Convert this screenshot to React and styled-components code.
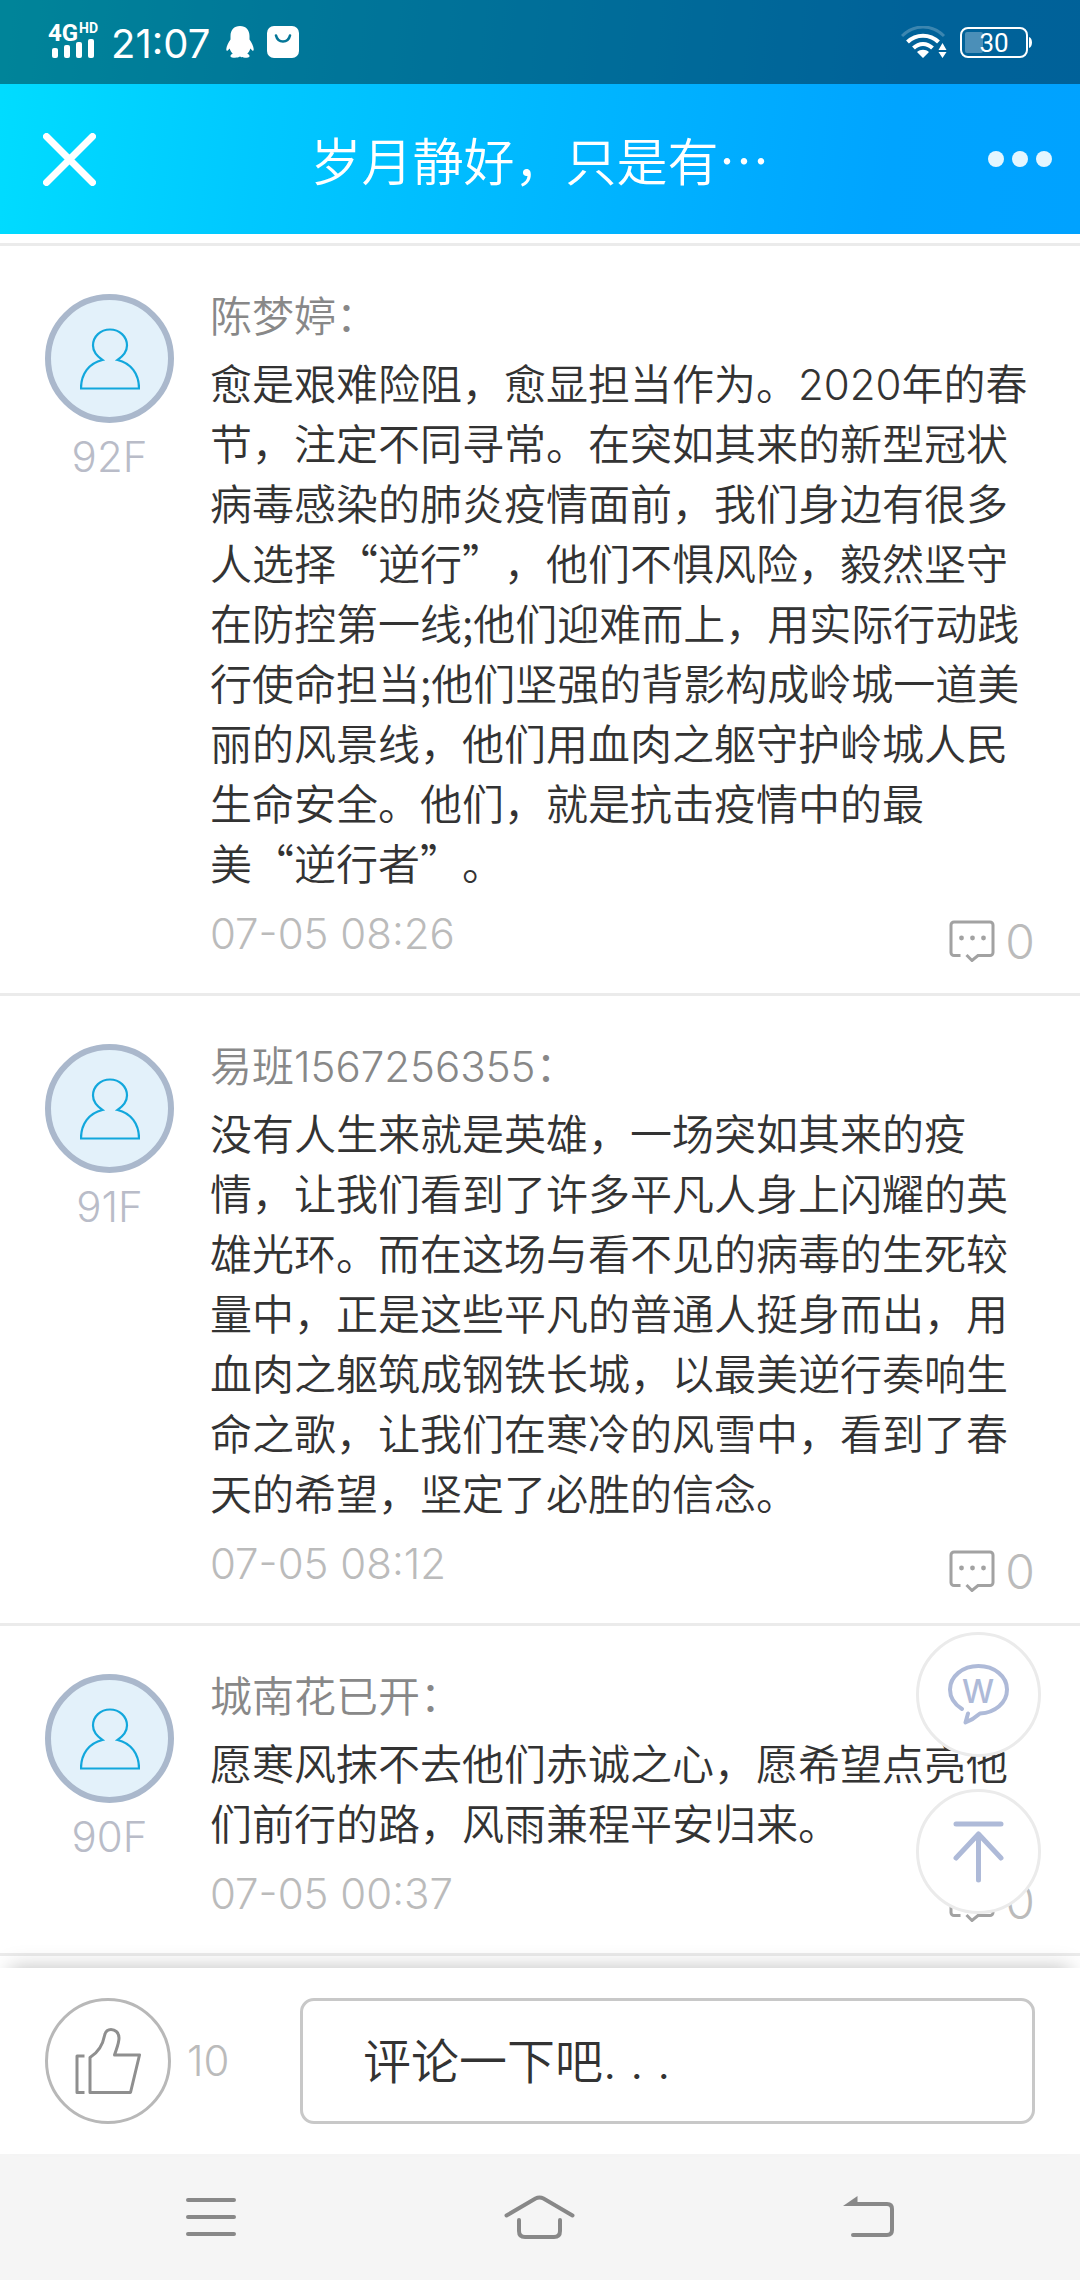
import React from 'react';
import styled, { createGlobalStyle } from 'styled-components';

const GlobalStyle = createGlobalStyle`
	* {
		box-sizing: border-box;
	}
	body {
		margin: 0;
		background: #fff;
		color: #333;
		font-family: Inter, 'Noto Sans CJK SC', sans-serif;
		font-weight: 300;
		text-spacing-trim: space-all;
	}
	button {
		padding: 0;
		border: none;
		background: none;
		font: inherit;
		color: inherit;
		cursor: pointer;
	}
	svg {
		display: block;
		flex: none;
	}
`;

const Page = styled.div`
	display: flex;
	flex-direction: column;
	min-height: 100vh;
`;

const Top = styled.header`
	background: linear-gradient(
		97deg,
		#00ddff 0%,
		#00c8ff 25%,
		#00b8ff 50%,
		#00a4ff 82%,
		#00a2ff 100%
	);
	color: #fff;
`;

const StatusBar = styled.div`
	display: flex;
	align-items: center;
	height: 84px;
	padding: 0 48px;
	background: rgba(0, 0, 0, 0.4);
`;

const Clock = styled.span`
	margin: 4px 16px 0 10px;
	font-size: 40px;
	line-height: 48px;
	font-weight: 400;
`;

const StatusGroup = styled.div`
	display: flex;
	align-items: center;
	gap: 13px;
	margin-left: ${(props) => (props.$end ? 'auto' : '0')};
`;

const TitleBar = styled.div`
	display: grid;
	grid-template-columns: 1fr auto 1fr;
	align-items: center;
	height: 150px;
	padding: 0 28px 0 43px;
`;

const TitleButton = styled.button`
	justify-self: ${(props) => (props.$end ? 'end' : 'start')};
`;

const Title = styled.h1`
	margin: 0 15px 0 0;
	font-family: 'Noto Sans CJK SC', sans-serif;
	font-size: 51px;
	line-height: 72px;
	font-weight: 350;
`;

const List = styled.main`
	position: relative;
	flex: 1;
	padding-top: 9px;
`;

const Item = styled.article`
	display: flex;
	gap: 36px;
	padding: 48px 45px 21px;
	border-bottom: 3px solid #ebebeb;
	&:first-child {
		border-top: 3px solid #ebebeb;
	}
`;

const Side = styled.div`
	display: flex;
	flex-direction: column;
	align-items: center;
	flex: none;
	width: 129px;
`;

const Avatar = styled.div`
	display: flex;
	align-items: center;
	justify-content: center;
	width: 129px;
	height: 129px;
	border: 6px solid #aab8cc;
	border-radius: 50%;
	background: #e3f1fa;
`;

const Floor = styled.span`
	margin-top: 10px;
	font-size: 42px;
	line-height: 48px;
	color: #b9bcc8;
`;

const Body = styled.div`
	flex: 1;
	min-width: 0;
`;

const Name = styled.h2`
	margin: 0 0 13px;
	font-size: 42px;
	line-height: 45px;
	font-weight: 350;
	color: #888;
`;

const Text = styled.p`
	margin: 0 0 18px;
	font-family: 'Noto Sans CJK SC', sans-serif;
	font-size: 42px;
	line-height: 60px;
	font-weight: 350;
`;

const Latin = styled.span`
	font-family: Inter, sans-serif;
	line-height: 1;
`;

const NoBreak = styled.span`
	white-space: nowrap;
`;

const Meta = styled.div`
	display: flex;
	justify-content: space-between;
	height: 62px;
	color: #bbb;
`;

const Time = styled.time`
	font-size: 42px;
	line-height: 48px;
`;

const Replies = styled.button`
	display: flex;
	align-items: center;
	gap: 10px;
	font-size: 48px;
`;

const Floating = styled.div`
	position: absolute;
	right: 39px;
	bottom: 54px;
	display: flex;
	flex-direction: column;
	gap: 32px;
`;

const RoundButton = styled.button`
	display: flex;
	align-items: center;
	justify-content: center;
	width: 125px;
	height: 125px;
	border: 3px solid #ebebeb;
	border-radius: 50%;
	background: #fff;
`;

const CommentBar = styled.form`
	position: relative;
	display: flex;
	align-items: center;
	padding: 30px 45px;
	background: #fff;
	box-shadow: 0 -10px 20px -10px rgba(0, 0, 0, 0.26);
`;

const LikeButton = styled(RoundButton)`
	width: 126px;
	height: 126px;
	border-color: #b8b8b8;
`;

const LikeCount = styled.span`
	width: 129px;
	padding-left: 16px;
	font-size: 42px;
	line-height: 48px;
	color: #bbb;
`;

const CommentInput = styled.input`
	flex: 1;
	min-width: 0;
	height: 126px;
	padding: 0 60px;
	border: 3px solid #c8c8c8;
	border-radius: 14px;
	background: #fff;
	font: inherit;
	font-size: 48px;
	font-weight: 350;
	color: #333;
	&::placeholder {
		color: #333;
		opacity: 1;
	}
`;

const NavBar = styled.nav`
	display: grid;
	grid-template-columns: repeat(3, 1fr);
	height: 126px;
	padding: 0 47px;
	background: #f5f5f5;
`;

const NavButton = styled.button`
	display: flex;
	align-items: center;
	justify-content: center;
`;

const SignalIcon = () => (
	<svg width='53' height='48' viewBox='0 -3 53 48' fill='#fff'>
		<text x='0' y='20' fontFamily='Roboto' fontWeight='700' fontSize='24'>
			4G
		</text>
		<text x='31' y='12' fontFamily='Roboto' fontWeight='700' fontSize='14'>
			HD
		</text>
		<rect x='4' y='27' width='6' height='10' rx='2' />
		<rect x='16' y='24' width='6' height='13' rx='2' />
		<rect x='28' y='21' width='6' height='16' rx='2' />
		<rect x='40' y='18' width='6' height='19' rx='2' />
	</svg>
);

const PenguinIcon = () => (
	<svg width='28' height='32' viewBox='0 0 28 32' fill='#fff'>
		<path d='M14 0C8 0 4.500 4 4.500 10v3.500C2.500 16.500.500 20 .300 23c-.1 2 .8 2.200 1.700 1.200l1.700-1.700c.5 2 1.500 3.800 3 5.200-1.700.6-2.500 1.700-2.200 2.800.3 1 2 1.300 4.500 1.300 2 0 3.800-.4 5-1.200 1.200.8 3 1.200 5 1.200 2.500 0 4.200-.3 4.500-1.300.3-1.100-.5-2.200-2.200-2.800 1.500-1.400 2.500-3.200 3-5.200l1.700 1.700c.9 1 1.800.8 1.700-1.200-.2-3-2.200-6.500-4.200-9.500V10c0-6-3.500-10-9.500-10z' />
	</svg>
);

const BagIcon = () => (
	<svg width='32' height='32' viewBox='0 0 32 32'>
		<rect width='32' height='32' rx='7' fill='#fff' />
		<path
			d='M9 9.500c1 4 3.500 6 7 6s6-2 7-6'
			fill='none'
			stroke='#047697'
			strokeWidth='2.600'
			strokeLinecap='round'
		/>
	</svg>
);

const WifiIcon = () => (
	<svg width='46' height='32' viewBox='0 0 46 32' fill='none'>
		<path d='M1 10C13-2 31-2 43 10' stroke='#3c86b0' strokeWidth='3' />
		<path
			d='M6.500 16C15 7.500 29 7.500 37.500 16M12.500 22C18 16.500 26 16.500 31.500 22'
			stroke='#fff'
			strokeWidth='4'
		/>
		<path
			d='M22 32l-6-6c3.500-3 8.500-3 12 0zM41.500 17l4 7h-8zM41.500 32l4-6h-8z'
			fill='#fff'
		/>
	</svg>
);

const BatteryIcon = () => (
	<svg width='72' height='31' viewBox='0 0 72 31'>
		<rect x='5' y='5' width='18' height='21' rx='2' fill='#4b8fb8' />
		<rect
			x='1'
			y='1'
			width='66'
			height='29'
			rx='7'
			fill='none'
			stroke='#fff'
			strokeWidth='2'
		/>
		<path d='M69 10c4 1 4 10 0 11z' fill='#fff' />
		<text
			x='34'
			y='25'
			fill='#fff'
			fontFamily='Roboto'
			fontWeight='400'
			fontSize='26'
			textAnchor='middle'
		>
			30
		</text>
	</svg>
);

const CloseIcon = () => (
	<svg width='53' height='53' viewBox='0 0 53 53'>
		<path
			d='M3.500 3.500l46 46M49.500 3.500l-46 46'
			stroke='#fff'
			strokeWidth='7'
			strokeLinecap='round'
		/>
	</svg>
);

const MoreIcon = () => (
	<svg width='64' height='16' viewBox='0 0 64 16' fill='#e4f6ff'>
		<circle cx='8' cy='8' r='8' />
		<circle cx='32' cy='8' r='8' />
		<circle cx='56' cy='8' r='8' />
	</svg>
);

const PersonIcon = () => (
	<svg
		width='60'
		height='62'
		viewBox='0 0 60 62'
		fill='none'
		stroke='#12a7dc'
		strokeWidth='2.200'
	>
		<path d='M22.500 32C16 27.500 13 22.500 13 17.500 13 8.500 20.500 1.500 30 1.500s17 7 17 16c0 5-3 10-9.500 14.500C51 35 59 46 59 60.500H1C1 46 9 35 22.500 32z' />
	</svg>
);

const ReplyIcon = () => (
	<svg width='46' height='42' viewBox='0 0 46 42' fill='none'>
		<path
			d='M11.500 35.500H5a3 3 0 0 1-3-3V5a3 3 0 0 1 3-3h36a3 3 0 0 1 3 3v27.500a3 3 0 0 1-3 3H29l-6 5-5.500-5.500'
			stroke='#a2a2a2'
			strokeWidth='3'
		/>
		<g fill='#a2a2a2'>
			<circle cx='12.500' cy='18' r='2.400' />
			<circle cx='23.500' cy='18' r='2.400' />
			<circle cx='34.500' cy='18' r='2.400' />
		</g>
	</svg>
);

const BubbleIcon = () => (
	<svg width='61' height='61' viewBox='0 0 61 61'>
		<path
			d='M14 45C6 40 2 33 2 25.500 2 12.500 14.500 2 30.500 2S59 12.500 59 25.500C59 39 47 48.500 32 49.500c-4 3.500-8 6.500-14.500 9l2.500-9'
			fill='none'
			stroke='#aebad8'
			strokeWidth='4'
			strokeLinejoin='round'
			strokeLinecap='round'
		/>
		<text
			x='30'
			y='39'
			fill='#aebad8'
			fontFamily='Inter'
			fontWeight='500'
			fontSize='32'
			textAnchor='middle'
		>
			W
		</text>
	</svg>
);

const ToTopIcon = () => (
	<svg
		width='51'
		height='62'
		viewBox='0 0 51 62'
		fill='none'
		stroke='#aebad8'
		strokeWidth='5'
		strokeLinecap='round'
		strokeLinejoin='round'
	>
		<path d='M3 3h45M25.500 13v46M3 37l22.500-24L48 37' />
	</svg>
);

const ThumbIcon = () => (
	<svg
		width='66'
		height='66'
		viewBox='0 0 66 66'
		fill='none'
		stroke='#8f8f8f'
		strokeWidth='3'
		strokeLinejoin='round'
	>
		<path d='M9.500 28H2v36.500h7.500' />
		<path d='M15 29.500v35h40.500L64.500 27H39.500c2-6.500 4.500-11.500 4.500-17C44 4.500 40 1.500 36 1.500c-3.500 0-5.500 2-6.300 5.500C28 16 24 24 15 29.500z' />
	</svg>
);

const MenuIcon = () => (
	<svg
		width='50'
		height='38'
		viewBox='0 0 50 38'
		stroke='#888'
		strokeWidth='4'
		strokeLinecap='round'
	>
		<path d='M2 2h46M2 19h46M2 36h46' />
	</svg>
);

const HomeIcon = () => (
	<svg
		width='71'
		height='44'
		viewBox='0 0 71 44'
		fill='none'
		stroke='#888'
		strokeWidth='4'
		strokeLinecap='round'
	>
		<path d='M2.500 20.500L31.500 3.500q4-2 8 0l29 17M15 25v11q0 6 6 6h29q6 0 6-6V25' />
	</svg>
);

const BackIcon = () => (
	<svg
		width='52'
		height='44'
		viewBox='0 0 52 44'
		fill='none'
		stroke='#888'
		strokeWidth='4'
		strokeLinecap='round'
	>
		<path d='M9 9h35q5 0 5 5v21q0 5-5 5H10' />
		<path d='M0 11L14.500 1v10z' fill='#888' stroke='none' />
	</svg>
);

const comments = [
	{
		floor: '92F',
		name: '陈梦婷：',
		time: '07-05 08:26',
		text: (
			<>
				愈是艰难险阻，愈显担当作为。<Latin>2020</Latin>
				年的春节，注定不同寻常。在突如其来的新型冠状病毒感染的肺炎疫情面前，我们身边有很多人选择“逆行”，他们不惧风险，毅然坚守在防控第一线;他们迎难而上，用实际行动践行使命担当;他们坚强的背影构成岭城一道美丽的风景线，他们用血肉之躯守护岭城人民生命安全。他们，就是抗击疫情中的最
				<NoBreak>美“逆行者”。</NoBreak>
			</>
		),
	},
	{
		floor: '91F',
		name: '易班1567256355：',
		time: '07-05 08:12',
		text: '没有人生来就是英雄，一场突如其来的疫情，让我们看到了许多平凡人身上闪耀的英雄光环。而在这场与看不见的病毒的生死较量中，正是这些平凡的普通人挺身而出，用血肉之躯筑成钢铁长城，以最美逆行奏响生命之歌，让我们在寒冷的风雪中，看到了春天的希望，坚定了必胜的信念。',
	},
	{
		floor: '90F',
		name: '城南花已开：',
		time: '07-05 00:37',
		text: '愿寒风抹不去他们赤诚之心，愿希望点亮他们前行的路，风雨兼程平安归来。',
	},
];

const App = () => {
	return (
		<>
			<GlobalStyle />
			<Page lang='zh-CN'>
				<Top>
					<StatusBar>
						<SignalIcon />
						<Clock>21:07</Clock>
						<StatusGroup>
							<PenguinIcon />
							<BagIcon />
						</StatusGroup>
						<StatusGroup $end>
							<WifiIcon />
							<BatteryIcon />
						</StatusGroup>
					</StatusBar>
					<TitleBar>
						<TitleButton aria-label='关闭'>
							<CloseIcon />
						</TitleButton>
						<Title>岁月静好，只是有…</Title>
						<TitleButton aria-label='更多' $end>
							<MoreIcon />
						</TitleButton>
					</TitleBar>
				</Top>
				<List>
					{comments.map((comment) => (
						<Item key={comment.floor}>
							<Side>
								<Avatar>
									<PersonIcon />
								</Avatar>
								<Floor>{comment.floor}</Floor>
							</Side>
							<Body>
								<Name>{comment.name}</Name>
								<Text>{comment.text}</Text>
								<Meta>
									<Time>{comment.time}</Time>
									<Replies aria-label='回复'>
										<ReplyIcon />0
									</Replies>
								</Meta>
							</Body>
						</Item>
					))}
					<Floating>
						<RoundButton aria-label='微博'>
							<BubbleIcon />
						</RoundButton>
						<RoundButton aria-label='回到顶部'>
							<ToTopIcon />
						</RoundButton>
					</Floating>
				</List>
				<CommentBar>
					<LikeButton type='button' aria-label='赞'>
						<ThumbIcon />
					</LikeButton>
					<LikeCount>10</LikeCount>
					<CommentInput
						type='text'
						aria-label='评论'
						placeholder='评论一下吧. . .'
					/>
				</CommentBar>
				<NavBar>
					<NavButton aria-label='菜单'>
						<MenuIcon />
					</NavButton>
					<NavButton aria-label='主页'>
						<HomeIcon />
					</NavButton>
					<NavButton aria-label='返回'>
						<BackIcon />
					</NavButton>
				</NavBar>
			</Page>
		</>
	);
};

export default App;
